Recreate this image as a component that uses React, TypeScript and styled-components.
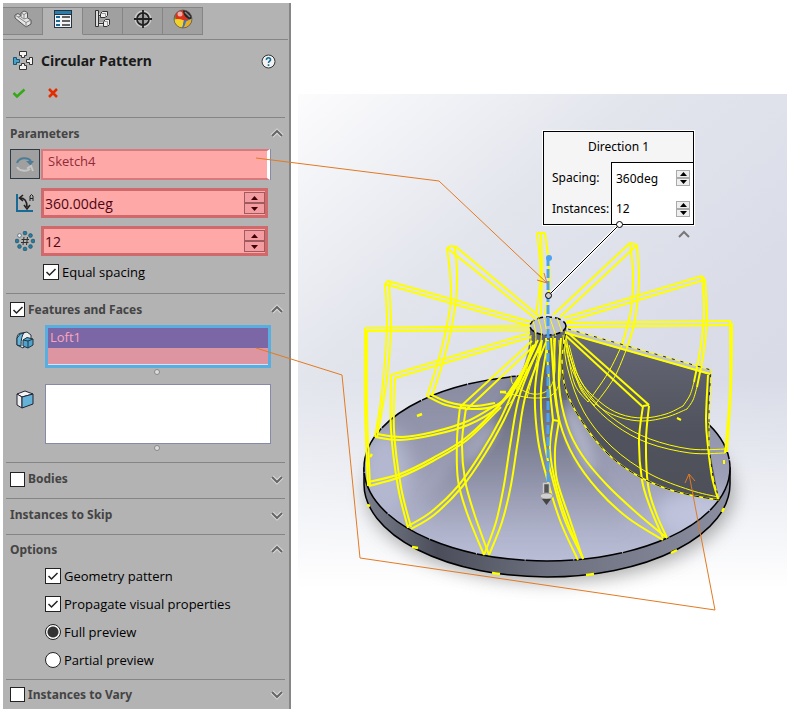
import React from "react";
import styled, { createGlobalStyle, css } from "styled-components";

const Global = createGlobalStyle`
  * { box-sizing: border-box; }
  body { margin: 0; background: #fff; font-family: "Open Sans", "Noto Sans", sans-serif; font-size: 13px; color: #000; }
  button, input { font: inherit; color: inherit; }
  svg { display: block; }
`;

const Page = styled.main`
  position: relative;
  display: flex;
  gap: 7px;
  min-height: 100vh;
  padding: 3px 3px 0;
`;

const Panel = styled.aside`
  flex: 0 0 288px;
  min-width: 0;
  align-self: flex-start;
  background: #b3b3b3;
  padding-top: 4px;
  border-right: 2px solid #868686;
`;

const TabBar = styled.nav`
  display: flex;
  height: 28px;
`;

const Tab = styled.button<{ $active?: boolean }>`
  width: 40px;
  padding: 0 0 4px;
  display: grid;
  place-items: center;
  border: solid #858585;
  border-width: 1px 1px 1px 0;
  background: #a0a0a0;
  ${(p) => p.$active && css`background: #b3b3b3; border-bottom-color: #b3b3b3;`}
`;

const Heading = styled.header`
  display: flex;
  align-items: center;
  gap: 8px;
  margin-top: 4px;
  margin-right: 1px;
  border-top: 1px solid #858585;
  height: 43px;
  padding: 0 12px 0 10px;
`;

const Title = styled.h1`
  flex: 1;
  margin: 0;
  font-family: "Noto Sans", sans-serif;
  font-size: 14px;
  line-height: 20px;
  color: #1a1a1a;
`;

const IconButton = styled.button`
  border: 0;
  padding: 0;
  background: none;
`;

const Confirm = styled.div`
  display: flex;
  gap: 22px;
  padding: 4px 9px 17px;
`;

const Section = styled.section<{ $bottom?: number }>`
  margin: 0 4px 0 3px;
  border-top: 1px solid #858585;
  padding-bottom: ${(p) => p.$bottom ?? 0}px;
`;

const SectionHead = styled.div<{ $height?: number }>`
  display: flex;
  align-items: center;
  gap: 3px;
  height: ${(p) => p.$height ?? 31}px;
  padding: 0 1px 0 4px;
`;

const SectionTitle = styled.h2`
  flex: 1;
  margin: 0;
  font-family: "Noto Sans", sans-serif;
  font-size: 12px;
  line-height: 18px;
  color: #444;
`;

const Rows = styled.div<{ $gap: number }>`
  display: flex;
  flex-direction: column;
  gap: ${(p) => p.$gap}px;
  padding: 0 15px 0 4px;
`;

const Row = styled.div<{ $gap: number }>`
  display: flex;
  align-items: flex-start;
  gap: ${(p) => p.$gap}px;
`;

const IconSlot = styled.span`
  flex: 0 0 30px;
  height: 30px;
  display: grid;
  place-items: center;
`;

const DirectionButton = styled.button`
  flex: 0 0 30px;
  height: 30px;
  padding: 0;
  display: grid;
  place-items: center;
  background: #a0a0a0;
  border: 1px solid #2c3c46;
`;

const PickList = styled.ul<{ $kind: "axis" | "features" | "faces" }>`
  flex: 1;
  min-width: 0;
  margin: 0;
  padding: 0;
  list-style: none;
  line-height: 18px;
  ${(p) => p.$kind === "axis" && css`
    height: 31px;
    padding: 1px 5px;
    color: #8f2c39;
    background: #ffa8a8;
    border: 2px solid #d67a7e;
    border-right: 3px solid #fff;
    box-shadow: 1px 0 0 #868aa8;
  `}
  ${(p) => p.$kind === "features" && css`
    height: 43px;
    color: #ffa5b8;
    background: #dd95a1;
    border: 3px solid #57aee0;
    box-shadow: inset 0 -1px 0 #d4e4f6;
    margin-right: -1px;
  `}
  ${(p) => p.$kind === "faces" && css`
    height: 60px;
    background: #fff;
    border: 1px solid #868aa8;
    margin-right: -1px;
  `}
`;

const Selected = styled.li`
  height: 20px;
  padding: 0 2px;
  line-height: 18px;
  background: #7b66a6;
`;

const Grip = styled.span`
  align-self: center;
  width: 6px;
  height: 6px;
  border: 1px solid #888;
  border-radius: 50%;
  background: #ddd;
  margin: 1px 0 1px 34px;
`;

const Spin = styled.div`
  flex: 1;
  min-width: 0;
  display: flex;
  align-items: center;
  height: 30px;
  margin-right: 2px;
  background: #ffa8a8;
  border: 3px solid #d0696c;
`;

const SpinInput = styled.input`
  flex: 1;
  width: 100%;
  min-width: 0;
  height: 100%;
  padding: 0 1px;
  border: 0;
  background: none;
  outline: 0;
  color: #4d0712;
  font-size: 14px;
`;

const Steppers = styled.div`
  display: flex;
  flex-direction: column;
`;

const Step = styled.button<{ $pale?: boolean }>`
  display: grid;
  place-items: center;
  width: ${(p) => (p.$pale ? 14 : 21)}px;
  height: ${(p) => (p.$pale ? 8 : 11)}px;
  padding: 0;
  border: 1px solid ${(p) => (p.$pale ? "#aaa" : "#9f5b60")};
  background: ${(p) => (p.$pale ? "#eee" : "#f39da0")};
  color: ${(p) => (p.$pale ? "#000" : "#40000a")};
`;

const Choice = styled.label<{ $indent: number; $height?: number }>`
  display: flex;
  align-items: center;
  gap: 3px;
  height: ${(p) => p.$height ?? 24}px;
  margin-left: ${(p) => p.$indent}px;
`;

const Box = styled.input<{ $small?: boolean }>`
  appearance: none;
  flex: none;
  margin: 0;
  width: ${(p) => (p.$small ? 15 : 16)}px;
  height: ${(p) => (p.$small ? 15 : 16)}px;
  border: 1px solid #222;
  background: #fff;
  &[type="radio"] { border-radius: 50%; }
  &[type="radio"]:checked { background: radial-gradient(circle, #333 5px, #fff 6px); }
`;

const CheckWrap = styled.span`
  display: grid;
  flex: none;
  place-items: center;
  > * { grid-area: 1 / 1; }
  svg { pointer-events: none; }
`;

const Viewport = styled.section`
  position: relative;
  flex: 1;
  margin-top: 91px;
  min-width: 0;
  overflow: hidden;
  background:
    linear-gradient(180deg, transparent 46%, #fff 80%),
    linear-gradient(140deg, #fcfcfd 0%, #e3e5ed 28%, #dadde8 55%, #d5d9e5 100%);
`;

const ModelDrawing = styled.svg`
  width: 490px;
  height: 618px;
`;

const Annotations = styled.svg`
  position: absolute;
  left: 0;
  top: 0;
  width: 790px;
  height: 712px;
  pointer-events: none;
`;

const Callout = styled.form`
  position: absolute;
  left: 245px;
  top: 37px;
  width: 151px;
  display: grid;
  grid-template-columns: 67px minmax(0, 1fr);
  border: 1px solid #000;
  outline: 1px solid #fff;
  background: #f5f5f5;
  font-family: "Noto Sans", sans-serif;
  font-size: 12px;
`;

const CalloutTitle = styled.h3`
  grid-column: 1 / -1;
  margin: 0;
  height: 30px;
  line-height: 30px;
  text-align: center;
  font-size: 12px;
  font-weight: 400;
`;

const CalloutLabel = styled.label`
  padding-left: 8px;
  line-height: 31px;
  white-space: nowrap;
`;

const CalloutField = styled.div<{ $first?: boolean }>`
  display: flex;
  align-items: center;
  padding: 0 3px 0 4px;
  height: 31px;
  background: #fff;
  border-left: 1px solid #000;
  border-top: ${(p) => (p.$first ? "1px solid #000" : "0")};
`;

const CalloutInput = styled.input`
  flex: 1;
  width: 100%;
  min-width: 0;
  padding: 0;
  border: 0;
  outline: 0;
  background: none;
`;

const Collapse = styled.button`
  position: absolute;
  left: 379px;
  top: 134px;
  padding: 0;
  border: 0;
  background: none;
`;

function Check({ label, checked, small }: { label: string; checked?: boolean; small?: boolean }) {
  const [on, setOn] = React.useState(!!checked);
  return (
    <CheckWrap>
      <Box type="checkbox" aria-label={label} checked={on} $small={small} onChange={() => setOn(!on)} />
      {on && (
        <svg width="12" height="12" viewBox="0 0 12 12" fill="none" stroke="#222" strokeWidth="1.5">
          <path d="M1.5 6 4.5 9 10.5 3" />
        </svg>
      )}
    </CheckWrap>
  );
}

function Chevron({ up }: { up?: boolean }) {
  const d = up ? "M2 9 7 4 12 9" : "M2 4 7 9 12 4";
  return (
    <svg width="14" height="13" viewBox="0 0 14 13" fill="none">
      <path d={d} stroke="#dcdcdc" strokeWidth="4" />
      <path d={d} stroke="#666" strokeWidth="2" />
    </svg>
  );
}

function Head({ title, open, box, height }: { title: string; open?: boolean; box?: "on" | "off"; height?: number }) {
  return (
    <SectionHead $height={height}>
      {box && <Check label={title} checked={box === "on"} small />}
      <SectionTitle>{title}</SectionTitle>
      <IconButton type="button" aria-label={`Toggle ${title}`}><Chevron up={open} /></IconButton>
    </SectionHead>
  );
}

function Arrows({ pale }: { pale?: boolean }) {
  return (
    <Steppers>
      <Step type="button" aria-label="Increase" $pale={pale}>
        <svg width="7" height="4" viewBox="0 0 7 4"><path d="M0 4 3.5 0 7 4z" fill="currentColor" /></svg>
      </Step>
      <Step type="button" aria-label="Decrease" $pale={pale}>
        <svg width="7" height="4" viewBox="0 0 7 4"><path d="M0 0 3.5 4 7 0z" fill="currentColor" /></svg>
      </Step>
    </Steppers>
  );
}

const PartIcon = () => (
  <svg width="18" height="18" viewBox="0 0 18 18" strokeLinejoin="round">
    <path d="M1 5 4 3.500 7 6V3L10 1 13.500 2.500V8L17 10V14L12 17 1 8z" fill="#e6e6e6" stroke="#555" />
    <path d="M7 3 10 4.500 13.500 2.500M10 4.500V9L7 7V6M10 9 13.500 8M12 12.500 17 10M12 12.500V17M12 12.500 4 7 1 5M4 7 7 6" fill="none" stroke="#888" />
  </svg>
);
const PropertyIcon = () => (
  <svg width="18" height="18" viewBox="0 0 18 18">
    <rect x=".5" y=".5" width="17" height="17" fill="#f3f3f3" stroke="#234" />
    <path d="M1 2.500H17" stroke="#2c7ea8" strokeWidth="3" /><path d="M0 4.500H18" stroke="#234" />
    <g fill="#176b96"><rect x="2" y="6" width="4" height="2" /><rect x="2" y="10" width="4" height="2" /><rect x="2" y="14" width="4" height="2" /></g>
    <path d="M8 7H16M8 11H16M8 15H16" stroke="#333" strokeWidth="1.5" />
  </svg>
);
const TreeIcon = () => (
  <svg width="18" height="20" viewBox="0 0 18 20" stroke="#333">
    <path d="M3 6H8M3 15H10" fill="none" stroke="#eee" strokeWidth="3" />
    <path d="M4 6.500H8M4 14.500H10" fill="none" />
    <path d="M1.500 1.500H4.500V17.500H1.500z" fill="#ddd" />
    <path d="M6.500 4.500 8.500 2.500H13.500V6.500L11.500 8.500H6.500zM9.500 12.500 11.500 10.500H15.500V15.500L13.500 17.500H9.500z" fill="#f0f0f0" />
    <path d="M6.500 4.500H11.500V8.500M9.500 12.500H13.500V17.500" fill="none" stroke="#999" />
  </svg>
);
const TargetIcon = () => (
  <svg width="20" height="20" viewBox="0 0 20 20" fill="none">
    <circle cx="10" cy="10" r="6.500" stroke="#ccc" strokeWidth="4" />
    <circle cx="10" cy="10" r="6" stroke="#222" strokeWidth="1.800" />
    <path d="M10 1V19M1 10H19" stroke="#222" strokeWidth="1.800" />
  </svg>
);
const AppearanceIcon = () => (
  <svg width="20" height="20" viewBox="0 0 20 20">
    <defs><clipPath id="ball"><circle cx="10" cy="10" r="9" /></clipPath></defs>
    <g clipPath="url(#ball)">
      <rect width="20" height="20" fill="#d9331f" />
      <path d="M0 0H4Q1 6 3 11L0 12z" fill="#58b23f" />
      <path d="M0 11Q5 9 11 11.500L9 20H0z" fill="#f2d32a" />
      <path d="M11 11.500Q17 11 20 6V20H9z" fill="#3478c8" />
      <path d="M13 12.500 20 9V20H9Q12 18 13 12.500z" fill="#e8b021" />
      <path d="M10 1Q18 0 19 8 18 12 14 9 10 6 10 1" fill="#262626" />
      <path d="M12 3 17 8" stroke="#888" strokeWidth="1.500" />
      <circle cx="7" cy="5" r="2.500" fill="#fff" opacity=".6" />
    </g>
    <circle cx="10" cy="10" r="9" fill="none" stroke="#555" strokeWidth=".700" />
  </svg>
);
const PatternIcon = () => (
  <svg width="20" height="20" viewBox="0 0 20 20" stroke="#333">
    <path d="M6.500 .500H13.500V4.500H11.500V6.500H8.500V4.500H6.500zM6.500 18.500H13.500V14.500H11.500V12.500H8.500V14.500H6.500zM19.500 6.500V13.500H16.500V11.500H13.500V8.500H16.500V6.500z" fill="#f4f4f4" />
    <path d="M.500 6.500V13.500H3.500V11.500H6.500V8.500H3.500V6.500z" fill="#4a9fc5" stroke="#155575" />
  </svg>
);
const HelpIcon = () => (
  <svg width="15" height="15" viewBox="0 0 15 15">
    <circle cx="7.500" cy="7.500" r="6.500" fill="#f2f2f2" stroke="#333" />
    <path d="M5.500 6C5 3 10 3 9.500 6 9.300 7.300 7.500 7.200 7.500 9M7.500 10.300V12" fill="none" stroke="#176b96" strokeWidth="1.600" />
  </svg>
);
const ReverseIcon = () => (
  <svg width="20" height="20" viewBox="0 0 20 20" fill="none">
    <path d="M2 9A8 7 0 0 1 16 7" stroke="#4e7c96" strokeWidth="2" /><path d="M11 7H19L15.500 11.500z" fill="#4e7c96" />
    <path d="M2 13A8 6 0 0 0 15 15M12 14.500 16 12 18 17" stroke="#c5c5c5" strokeWidth="2" />
  </svg>
);
const AngleIcon = () => (
  <svg width="20" height="20" viewBox="0 0 20 20" fill="none">
    <path d="M2 1V18H18" stroke="#176b96" strokeWidth="2" />
    <path d="M5 5Q12 5 12 14M8 2 4.500 5 8 8M9 12 12 16 15 12" stroke="#222" strokeWidth="1.600" />
    <path d="M15 8V3Q16.500 0 18 3V8M15 5.500H18" stroke="#222" />
  </svg>
);
const CountIcon = () => (
  <svg width="20" height="20" viewBox="0 0 20 20">
    {[[10, 2], [15.5, 4.5], [18, 10], [15.5, 15.5], [10, 18], [4.5, 15.5], [2, 10], [4.5, 4.5]].map(([x, y], i) => (
      <circle key={i} cx={x} cy={y} r="1.900" fill={i === 7 ? "#eee" : "#257ca3"} stroke="#25495b" strokeWidth=".600" />
    ))}
    <path d="M9 6 8 14M12.500 6 11.500 14M6.500 8.500H14M6 11.500H13.500" stroke="#333" />
  </svg>
);
const FeatureIcon = () => (
  <svg width="18" height="19" viewBox="0 0 18 19" stroke="#234" strokeLinejoin="round">
    <path d="M1 7Q1 2 6 2L11 1 15 4V10L7 17 1 14z" fill="#eee" />
    <path d="M2 6Q3 2 8 2 5 5 5 15L1 14V7z" fill="#65b5d8" />
    <path d="M7 9 11 6.500 17 8V14L12 17 7 15z" fill="#4da3cb" /><path d="M7 9 12 10 17 8M12 10V17" fill="none" />
  </svg>
);
const FaceIcon = () => (
  <svg width="18" height="19" viewBox="0 0 18 19" stroke="#223" strokeLinejoin="round">
    <path d="M1 4 9 1 17 4 6 7z" fill="#f4f4f4" /><path d="M1 4 6 7V18L1 15z" fill="#eee" /><path d="M6 7 17 4V14L6 18z" fill="#64b2d8" />
  </svg>
);

type Pt = [number, number];

/* Smooth curve through the listed points. */
function curve(points: Pt[]) {
  let d = `M${points[0][0]} ${points[0][1]}`;
  for (let i = 0; i < points.length - 1; i++) {
    const a = points[i - 1] ?? points[i];
    const b = points[i];
    const c = points[i + 1];
    const e = points[i + 2] ?? c;
    d += `C${b[0] + (c[0] - a[0]) / 6} ${b[1] + (c[1] - a[1]) / 6} ${c[0] - (e[0] - b[0]) / 6} ${c[1] - (e[1] - b[1]) / 6} ${c[0]} ${c[1]}`;
  }
  return d;
}

const boldEdges: Pt[][] = [
  [[447, 248], [536, 319]], [[455, 246], [540, 317]], [[447, 248], [451, 246], [455, 247]],
  [[447, 248], [450, 273], [451, 300], [446, 330], [438, 362], [427, 396]],
  [[455, 247], [457, 273], [456, 300], [451, 330], [443, 362], [432, 396]],
  [[427, 396], [446, 405], [473, 409], [497, 405], [517, 385], [533, 345]],
  [[430, 394], [448, 402], [473, 406], [495, 403]],
  [[385, 284], [530, 326]], [[388, 281], [531, 322]], [[385, 284], [388, 281], [391, 284]],
  [[385, 284], [387, 320], [385, 360], [381, 400], [375, 437]],
  [[389, 284], [391, 325], [388, 370], [382, 410], [377, 437]],
  [[375, 437], [400, 440], [433, 435], [468, 425], [498, 407], [520, 377], [534, 345]],
  [[377, 434], [402, 437], [433, 432], [468, 421], [496, 405]],
  [[365, 328], [530, 326]], [[366, 331], [530, 330]],
  [[365, 328], [365, 410], [368, 486]], [[367, 330], [367, 410], [370, 486]],
  [[368, 482], [400, 474], [433, 458], [467, 437], [500, 404], [522, 372], [536, 345]],
  [[369, 486], [400, 477], [433, 461], [467, 440], [501, 407]],
  [[391, 375], [530, 333]], [[395, 378], [531, 337]], [[391, 375], [391, 430], [398, 487], [408, 528]],
  [[395, 377], [394, 430], [401, 487], [411, 527]],
  [[408, 526], [431, 512], [458, 486], [481, 453], [500, 420], [516, 385], [538, 340]],
  [[411, 529], [434, 515], [462, 487], [485, 454], [504, 420], [520, 385], [541, 345]],
  [[460, 407], [532, 341]], [[466, 410], [536, 344]], [[460, 407], [466, 408]],
  [[460, 407], [457, 440], [458, 480], [467, 513], [484, 555]],
  [[466, 408], [462, 443], [465, 480], [474, 513], [489, 555]],
  [[484, 555], [496, 522], [504, 485], [511, 440], [520, 394], [541, 342]],
  [[489, 555], [502, 522], [511, 485], [518, 440], [526, 394], [546, 342]],
  [[546, 338], [549, 380], [553, 420]], [[551, 338], [554, 380], [559, 421]], [[553, 420], [559, 421]],
  [[553, 420], [550, 450], [556, 485], [568, 523], [583, 559]],
  [[559, 421], [555, 450], [557, 480], [570, 520], [583, 559]],
  [[542, 340], [535, 390], [538, 440], [548, 482], [561, 523], [578, 560]],
  [[548, 340], [541, 390], [544, 440], [554, 485], [566, 523], [583, 558]],
  [[565, 335], [643, 407]], [[567, 332], [649, 405]], [[643, 406], [649, 405]],
  [[643, 406], [639, 440], [642, 480], [650, 507], [663, 538]],
  [[649, 406], [646, 440], [648, 485], [656, 513], [667, 538]],
  [[555, 338], [554, 385], [560, 423], [574, 457], [598, 490], [628, 518], [663, 540]],
  [[561, 338], [559, 385], [567, 425], [582, 455], [607, 485], [638, 514], [667, 538]],
  [[566, 323], [731, 321]], [[567, 327], [730, 325]],
  [[730, 322], [730, 390], [725, 453]], [[732, 323], [731, 390], [727, 452]],
  [[564, 318], [702, 276]], [[566, 322], [704, 280]], [[702, 276], [705, 280]],
  [[702, 276], [704, 310], [701, 345], [694, 382]], [[705, 280], [707, 315], [704, 350], [697, 387]],
  [[553, 315], [630, 243]], [[560, 317], [636, 246]], [[630, 243], [637, 245]],
  [[630, 243], [633, 273], [631, 310], [622, 345]], [[637, 245], [639, 280], [635, 320], [627, 348]],
  [[537, 233], [545, 233]], [[537, 233], [540, 260], [540, 285], [536, 315]],
  [[541, 233], [542, 265], [541, 315]], [[545, 233], [549, 265], [549, 290], [545, 315]],
  [[566, 333], [710, 374]],
  [[708, 375], [706, 420], [708, 447], [712, 477], [718, 499]],
];

const thinEdges: Pt[][] = [
  [[622, 345], [608, 373], [588, 402]], [[627, 348], [614, 378], [594, 406]],
  [[588, 402], [575, 385], [568, 355], [565, 335]], [[594, 405], [580, 388], [570, 355]],
  [[694, 382], [690, 395], [683, 406]], [[697, 387], [693, 400], [687, 409]],
  [[683, 406], [666, 414], [643, 418], [620, 414], [600, 402], [580, 380], [569, 345]],
  [[687, 409], [667, 417], [643, 421], [619, 417], [597, 405], [578, 380], [567, 345]],
  [[727, 449], [690, 449], [650, 439], [618, 422], [592, 398], [573, 365], [566, 337]],
  [[725, 453], [690, 453], [648, 443], [615, 425], [589, 400], [571, 367], [564, 337]],
  [[718, 497], [690, 490], [650, 474], [612, 447], [584, 412], [568, 370], [563, 335]],
  [[568, 329], [711, 370]], [[711, 370], [709, 447], [713, 477], [719, 499]],
  [[500, 392], [515, 395], [533, 398], [552, 395], [560, 378], [559, 340]],
  [[511, 376], [514, 385], [533, 394], [549, 389], [555, 370], [553, 336]],
  [[533, 320], [535, 345], [516, 390]], [[538, 318], [541, 340], [527, 398]],
  [[544, 318], [548, 338]], [[550, 318], [556, 336]], [[557, 318], [562, 332]],
  [[531, 335], [529, 360], [518, 392], [505, 408]],
];

const bladeOutline: Pt[] = [[719, 500], [690, 495], [662, 487], [633, 473], [606, 452], [581, 420], [566, 390], [562, 360], [566, 331]];

function Model() {
  return (
    <ModelDrawing viewBox="298 94 490 618" role="img" aria-label="Circular pattern preview">
      <defs>
        <linearGradient id="top" x1="0" y1="0" x2="0" y2="1">
          <stop offset="0" stopColor="#888ba0" /><stop offset=".5" stopColor="#9a9db3" /><stop offset="1" stopColor="#b9bdd6" />
        </linearGradient>
        <linearGradient id="side" x1="0" x2="1">
          <stop offset="0" stopColor="#7b7e8c" /><stop offset=".2" stopColor="#4b4e5a" /><stop offset=".5" stopColor="#6c6f7d" /><stop offset="1" stopColor="#8b8ea0" />
        </linearGradient>
        <linearGradient id="cone" gradientUnits="userSpaceOnUse" x1="0" y1="330" x2="0" y2="535">
          <stop offset="0" stopColor="#5a5d69" /><stop offset=".35" stopColor="#666977" />
          <stop offset=".65" stopColor="#82859a" stopOpacity=".8" /><stop offset="1" stopColor="#9a9db3" stopOpacity="0" />
        </linearGradient>
        <linearGradient id="blade" x1="0" y1="0" x2="0" y2="1">
          <stop offset="0" stopColor="#666976" /><stop offset=".6" stopColor="#50525d" /><stop offset="1" stopColor="#4e5059" />
        </linearGradient>
        <filter id="soft" x="-30%" y="-30%" width="160%" height="160%"><feGaussianBlur stdDeviation="9" /></filter>
        <filter id="glow" x="-50%" y="-50%" width="200%" height="200%"><feGaussianBlur stdDeviation="6" /></filter>
        <clipPath id="disc"><path d="M364 468A183 93 0 0 0 730 468 183 93 0 0 0 569 376L566 326H530Q530 355 519 377A183 93 0 0 0 364 468z" /></clipPath>
      </defs>

      <ellipse cx="550" cy="492" rx="184" ry="90" fill="#777" opacity=".6" filter="url(#soft)" />
      <path d="M364 468V484A183 93 0 0 0 730 484V468z" fill="url(#side)" stroke="#000" strokeWidth="1.500" />
      <ellipse cx="547" cy="468" rx="183" ry="93" fill="url(#top)" />
      <g clipPath="url(#disc)">
        <ellipse cx="385" cy="475" rx="26" ry="45" fill="#b3b7cf" filter="url(#soft)" />
        <ellipse cx="695" cy="515" rx="40" ry="24" fill="#bfc3dc" filter="url(#soft)" />
      </g>
      <ellipse cx="547" cy="468" rx="183" ry="93" fill="none" stroke="#000" strokeWidth="1.500" strokeDasharray="48 1" />
      <g clipPath="url(#disc)">
        <path d="M530 326Q528 370 505 402 470 450 425 500L440 545H625L622 500Q575 450 566 390V326z" fill="url(#cone)" filter="url(#glow)" />
        <path d="M530 328H567V400H512Q530 370 530 328z" fill="#5f626f" opacity=".85" />
        <ellipse cx="480" cy="442" rx="8" ry="26" fill="#b2b5ca" opacity=".7" transform="rotate(38 480 442)" filter="url(#glow)" />
        <ellipse cx="580" cy="440" rx="8" ry="38" fill="#b6b9ce" opacity=".9" transform="rotate(-22 580 440)" filter="url(#glow)" />
      </g>
      <path d={`${curve(bladeOutline)}L711 371 708 420 709 447z`} fill="url(#blade)" />
      <path d="M568 329 711 370V375L567 334z" fill="#c2c4cc" />
      <ellipse cx="548" cy="326" rx="18" ry="9" fill="#bbbfd0" stroke="#000" strokeWidth="1.500" strokeDasharray="6 3" />

      <g fill="none" stroke="#ff0" strokeLinejoin="round">
        {thinEdges.map((e, i) => <path key={i} d={curve(e)} strokeWidth="1" />)}
        {boldEdges.map((e, i) => <path key={i} d={curve(e)} strokeWidth="2" />)}
        <path d={curve(bladeOutline)} strokeWidth="1.500" />
        <path d="M500 392H506M417 416 422 414M370 457 372 454M367 505 370 506M412 547 418 548M492 573 500 574M586 575 594 574M671 553 677 550M722 512 724 508" strokeWidth="2.500" />
        <path d="M677 418 681 420M724 460V464" strokeWidth="2" />
      </g>
      <path d={curve(bladeOutline)} fill="none" stroke="#111" strokeDasharray="6 4" />
      <path d="M568 329 711 370 709 400V447L713 477 719 499" fill="none" stroke="#222" strokeDasharray="3 6" />

      <path d="M548 257V486" stroke="#4ca3f4" strokeWidth="3" strokeDasharray="9 3" />
      <circle cx="549" cy="258" r="3" fill="#4ca3f4" />
      <path d="M543.500 483.500H549.500V494.500H543.500z" fill="#555" stroke="#ccc" strokeWidth="1.500" />
      <ellipse cx="546.500" cy="496" rx="6.500" ry="3" fill="#d0d0d0" stroke="#999" /><path d="M542 499H551L546.500 505z" fill="#444" />
      <path d="M619 225 549 295" stroke="#fff" strokeWidth="3" /><path d="M619 225 549 295" stroke="#000" />
      <circle cx="548.500" cy="295.500" r="3" fill="#ccc" stroke="#000" />
    </ModelDrawing>
  );
}

export default function App() {
  const [preview, setPreview] = React.useState("Full preview");
  return (
    <Page>
      <Global />
      <Panel>
        <TabBar aria-label="Manager tabs">
          <Tab aria-label="Feature tree"><PartIcon /></Tab>
          <Tab aria-label="Property manager" $active><PropertyIcon /></Tab>
          <Tab aria-label="Configurations"><TreeIcon /></Tab>
          <Tab aria-label="Dimensions"><TargetIcon /></Tab>
          <Tab aria-label="Appearances"><AppearanceIcon /></Tab>
        </TabBar>
        <Heading>
          <PatternIcon />
          <Title>Circular Pattern</Title>
          <IconButton type="button" aria-label="Help"><HelpIcon /></IconButton>
        </Heading>
        <Confirm>
          <IconButton type="button" aria-label="OK">
            <svg width="14" height="14" viewBox="0 0 14 14" fill="none"><path d="M1.500 7 5 10.500 12.500 3.500" stroke="#35a916" strokeWidth="2.500" /></svg>
          </IconButton>
          <IconButton type="button" aria-label="Cancel">
            <svg width="10" height="14" viewBox="0 0 10 14" fill="none"><path d="M1 3 9 11M9 3 1 11" stroke="#e52b00" strokeWidth="2.500" /></svg>
          </IconButton>
        </Confirm>

        <Section $bottom={13}>
          <Head title="Parameters" open />
          <Rows $gap={8}>
            <Row $gap={1}>
              <DirectionButton type="button" aria-label="Reverse direction"><ReverseIcon /></DirectionButton>
              <PickList $kind="axis" aria-label="Pattern axis"><li>Sketch4</li></PickList>
            </Row>
            <Row $gap={1}>
              <IconSlot><AngleIcon /></IconSlot>
              <Spin><SpinInput aria-label="Angle" defaultValue="360.00deg" /><Arrows /></Spin>
            </Row>
            <Row $gap={1}>
              <IconSlot><CountIcon /></IconSlot>
              <Spin><SpinInput aria-label="Number of instances" defaultValue="12" /><Arrows /></Spin>
            </Row>
            <Choice $indent={33} $height={16}><Check label="Equal spacing" checked />Equal spacing</Choice>
          </Rows>
        </Section>

        <Section $bottom={10}>
          <Head title="Features and Faces" open box="on" />
          <Rows $gap={0}>
            <Row $gap={5}>
              <IconSlot><FeatureIcon /></IconSlot>
              <PickList $kind="features" aria-label="Features to pattern"><Selected>Loft1</Selected></PickList>
            </Row>
          </Rows>
          <Rows $gap={8}>
            <Grip />
            <Row $gap={5}>
              <IconSlot><FaceIcon /></IconSlot>
              <PickList $kind="faces" aria-label="Faces to pattern" />
            </Row>
          </Rows>
          <Rows $gap={0}><Grip /></Rows>
        </Section>

        <Section $bottom={3}><Head title="Bodies" box="off" height={32} /></Section>
        <Section $bottom={3}><Head title="Instances to Skip" height={32} /></Section>
        <Section $bottom={7}>
          <Head title="Options" open height={29} />
          <Rows $gap={4}>
            <Choice $indent={35}><Check label="Geometry pattern" checked />Geometry pattern</Choice>
            <Choice $indent={35}><Check label="Propagate visual properties" checked />Propagate visual properties</Choice>
            {["Full preview", "Partial preview"].map((name) => (
              <Choice key={name} $indent={35}>
                <Box type="radio" name="preview" checked={preview === name} onChange={() => setPreview(name)} />{name}
              </Choice>
            ))}
          </Rows>
        </Section>
        <Section><Head title="Instances to Vary" box="off" height={29} /></Section>
      </Panel>

      <Viewport>
        <Model />
        <Callout>
          <CalloutTitle>Direction 1</CalloutTitle>
          <CalloutLabel htmlFor="spacing">Spacing:</CalloutLabel>
          <CalloutField $first><CalloutInput id="spacing" defaultValue="360deg" /><Arrows pale /></CalloutField>
          <CalloutLabel htmlFor="instances">Instances:</CalloutLabel>
          <CalloutField><CalloutInput id="instances" defaultValue="12" /><Arrows pale /></CalloutField>
        </Callout>
        <Collapse type="button" aria-label="Collapse callout">
          <svg width="14" height="13" viewBox="0 0 14 13" fill="none"><path d="M2 9 7 4 12 9" stroke="#777" strokeWidth="2" /></svg>
        </Collapse>
      </Viewport>

      <Annotations viewBox="0 0 790 712" aria-hidden="true" fill="none">
        <path d="M256 158 439 181 547 283M537 280 547 283 544 273M256 348 342 375 360 558 715 610 689 474M685 483 689 474 695 481" stroke="#e27a22" />
        <circle cx="619.500" cy="224.500" r="3" fill="#fff" stroke="#000" />
      </Annotations>
    </Page>
  );
}
